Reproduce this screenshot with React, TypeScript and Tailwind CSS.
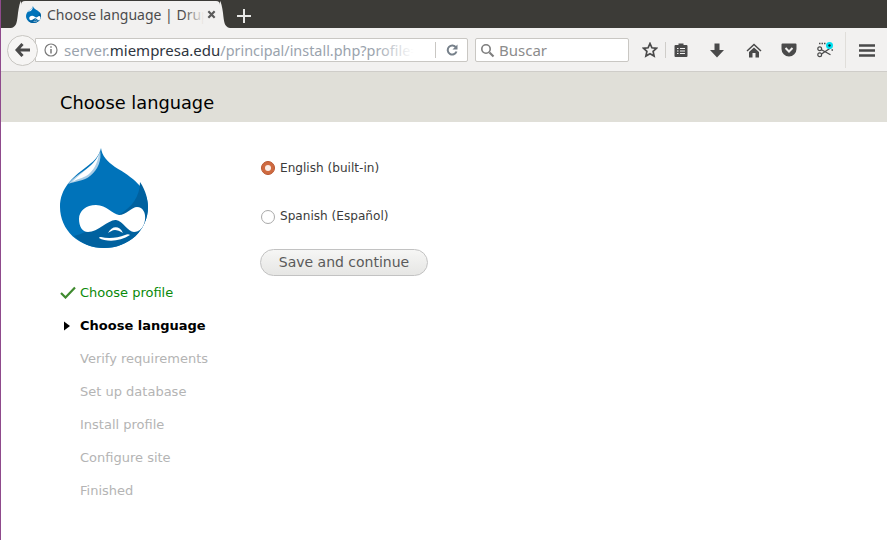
import React from "react";

const chrome = { fontFamily: '"Noto Sans", "Open Sans", sans-serif' };
const body = { fontFamily: '"DejaVu Sans", sans-serif' };

function DrupalDrop({ size }: { size: number }) {
  return (
    <svg width={size} height={Math.round(size * (100 / 88))} viewBox="0 0 88 100">
      <path d="M41 0C42 8 47 13 55 19C72 29 88 40 88 59C88 82 69 100 44 100C19 100 0 82 0 59C0 40 13 29 25 20C33 14 39 9 41 0Z" fill="#0073ba" />
      <path d="M80 34C86 43 88 52 88 59C88 82 69 100 44 100C32 100 22 96 14 88C30 84 45 72 58 67C72 60 80 48 80 34Z" fill="#00619f" />
      <path d="M40 2C39 10 33 16 25 22C19 26 13 30 8 36C16 33 24 33 30 28C38 22 42 12 40 2Z" fill="#a9cde6" />
      <path d="M39 6C36 14 28 20 22 25C18 28 15 31 12 34C19 30 25 30 30 25C35 20 38 13 39 6Z" fill="#ffffff" />
      <path d="M36 57C47 57 52 66 59 67C66 67 72 59 77 59C83 59 86 65 85 72C84 80 79 84 74 84C68 84 63 73 56 72C49 71 38 84 28 84C22 84 19 78 19 71C19 63 26 57 36 57Z" fill="#ffffff" />
      <path d="M39 90C46 94 60 94 70 87C69 86 67 86 65 87C58 90 48 91 41 89C40 89 39 89 39 90Z" fill="#ffffff" />
      <path d="M48 85C52 78 59 77 63 85C60 83 57 82 55 82C52 82 50 84 48 85Z" fill="#ffffff" />
    </svg>
  );
}

function Step({ label, state }: { label: string; state: "done" | "active" | "todo" }) {
  const color =
    state === "done"
      ? "text-[#0a8a0a]"
      : state === "active"
        ? "text-black font-bold"
        : "text-[#b4b4b4]";
  return (
    <li className={`flex h-[33px] items-center whitespace-nowrap text-[13px] ${color}`}>
      <span className="flex w-[20px] shrink-0 items-center">
        {state === "done" && (
          <svg width="16" height="13" viewBox="0 0 16 13">
            <path d="M1 7l4.500 4.500L15 1.500" fill="none" stroke="#3f8a2f" strokeWidth="2.200" />
          </svg>
        )}
        {state === "active" && (
          <svg width="14" height="10" viewBox="0 0 14 10">
            <path d="M4 0.500l6 4.500-6 4.500z" fill="#000" />
          </svg>
        )}
      </span>
      {label}
    </li>
  );
}

export default function App() {
  return (
    <div className="flex h-[540px] w-[887px] overflow-hidden bg-white">
      <div className="w-[1px] shrink-0 bg-[#8f4a8c]" />
      <div className="flex min-w-0 flex-1 flex-col">
        {/* tab strip */}
        <div className="flex h-[28px] items-end bg-[#3c3b37] pl-[10px]" style={chrome}>
          <svg width="10" height="27" viewBox="0 0 10 27">
            <path d="M0 27C6 26 6 20 7 12C8 5 9 1 10 0V27Z" fill="#f2f1f0" />
          </svg>
          <div className="flex h-[27px] w-[199px] items-center rounded-t-[4px] bg-[#f2f1f0] pl-[5px]">
            <DrupalDrop size={15} />
            <span className="relative ml-[6px] w-[157px] overflow-hidden whitespace-nowrap text-[14px] text-[#4c4c4c]">
              Choose language | Drupal
              <span className="absolute inset-y-0 right-0 w-[20px] bg-gradient-to-r from-transparent to-[#f2f1f0]" />
            </span>
            <svg className="ml-[3px]" width="9" height="9" viewBox="0 0 10 10">
              <path d="M1.500 1.500l7 7M8.500 1.500l-7 7" stroke="#5a5a5a" strokeWidth="2.400" />
            </svg>
          </div>
          <svg width="10" height="27" viewBox="0 0 10 27">
            <path d="M10 27C4 26 4 20 3 12C2 5 1 1 0 0V27Z" fill="#f2f1f0" />
          </svg>
          <svg className="mb-[5px] ml-[7px]" width="14" height="14" viewBox="0 0 14 14">
            <path d="M7 0v14M0 7h14" stroke="#e8e8e6" strokeWidth="2" />
          </svg>
        </div>

        {/* toolbar */}
        <div className="flex h-[44px] items-center border-b border-[#cfcdc9] bg-[#f2f1f0] pt-[1px]" style={chrome}>
          <div className="z-10 ml-[6px] flex h-[31px] w-[31px] shrink-0 items-center justify-center rounded-full border border-[#c8c6c2] bg-[#f6f5f4]">
            <svg width="16" height="14" viewBox="0 0 16 14">
              <path d="M7.500 1L2 7l5.500 6M2.500 7H15" fill="none" stroke="#4a4a4a" strokeWidth="3" />
            </svg>
          </div>
          <div className="-ml-[3px] flex h-[24px] w-[433px] shrink-0 items-center rounded-r-[2px] border border-[#c9c7c3] bg-white pl-[8px]">
            <svg width="14" height="14" viewBox="0 0 14 14">
              <circle cx="7" cy="7" r="6" fill="none" stroke="#7a7a7a" strokeWidth="1.200" />
              <path d="M7 6v4.500M7 3.300v1.500" stroke="#7a7a7a" strokeWidth="1.500" />
            </svg>
            <span className="relative ml-[6px] w-[350px] overflow-hidden whitespace-nowrap text-[15px] text-[#9aa3ad]">
              server.<span className="text-[#2e3540]">miempresa.edu</span>
              <span className="text-[14.4px]">/principal/install.php?profile=standard</span>
              <span className="absolute inset-y-0 right-0 w-[40px] bg-gradient-to-r from-transparent to-white" />
            </span>
            <span className="ml-[21px] h-[16px] w-[1px] bg-[#c9c7c3]" />
            <svg className="ml-[10px]" width="12" height="12" viewBox="0 0 12 12">
              <path d="M10 3.500A4.500 4.500 0 1 0 10.500 7.500" fill="none" stroke="#76808a" strokeWidth="2" />
              <path d="M11.500 0.500v5h-5z" fill="#76808a" />
            </svg>
          </div>
          <div className="ml-[7px] flex h-[24px] w-[154px] shrink-0 items-center rounded-[2px] border border-[#c9c7c3] bg-white pl-[4px]">
            <svg width="15" height="15" viewBox="0 0 15 15">
              <circle cx="6" cy="6" r="4.200" fill="none" stroke="#7d7d7d" strokeWidth="1.600" />
              <path d="M9.500 9.500l4 4" stroke="#7d7d7d" strokeWidth="2.200" />
            </svg>
            <span className="ml-[4px] text-[15px] text-[#8c8c8c]">Buscar</span>
          </div>

          <svg className="ml-[13px]" width="16" height="16" viewBox="0 0 16 16">
            <path d="M8 1.500l1.900 4.300 4.600.5-3.400 3.100 1 4.600L8 11.700l-4.100 2.300 1-4.600-3.400-3.100 4.600-.5z" fill="none" stroke="#4a4a4a" strokeWidth="1.700" />
          </svg>
          <span className="ml-[7px] h-[16px] w-[1px] bg-[#cfcdc9]" />
          <svg className="ml-[8px]" width="14" height="16" viewBox="0 0 14 16">
            <path d="M1.500 3h3V1.500h5V3h3A1 1 0 0 1 13.500 4v10a1 1 0 0 1-1 1h-11a1 1 0 0 1-1-1V4a1 1 0 0 1 1-1z" fill="#4a4a4a" />
            <path d="M3 6.500h1.500M6 6.500h5M3 9h1.500M6 9h5M3 11.500h1.500M6 11.500h5" stroke="#f2f1f0" strokeWidth="1.100" />
          </svg>
          <svg className="ml-[22px]" width="14" height="15" viewBox="0 0 14 15">
            <path d="M4.500 0.500h5V7H14l-7 7.500L0 7h4.500z" fill="#4a4a4a" />
          </svg>
          <svg className="ml-[22px]" width="16" height="15" viewBox="0 0 16 15">
            <path d="M8 0.500L0.500 7.500l1 1L8 2.500l6.500 6 1-1z" fill="#4a4a4a" />
            <path d="M8 4.500L3 9v5.500h3.500V10h3v4.500H13V9z" fill="#4a4a4a" />
          </svg>
          <svg className="ml-[19px]" width="16" height="14" viewBox="0 0 16 14">
            <path d="M1.500 0.500h13a1 1 0 0 1 1 1V6a7.500 7.500 0 0 1-15 0V1.500a1 1 0 0 1 1-1z" fill="#4a4a4a" />
            <path d="M4.500 5L8 8.500 11.500 5" fill="none" stroke="#f2f1f0" strokeWidth="2" />
          </svg>
          <svg className="ml-[20px]" width="17" height="16" viewBox="0 0 17 16">
            <circle cx="2.700" cy="12.800" r="1.900" fill="none" stroke="#4a4a4a" strokeWidth="1.200" />
            <circle cx="2.700" cy="6.800" r="1.900" fill="none" stroke="#4a4a4a" strokeWidth="1.200" />
            <path d="M4.500 7.800l9 5M4.500 12l9-6" stroke="#4a4a4a" strokeWidth="1.300" />
            <path d="M2 1.500h7M14.500 8h2" stroke="#4a4a4a" strokeWidth="1.400" strokeDasharray="1.500 1" />
            <circle cx="12.500" cy="3.500" r="3.500" fill="#00e0f0" />
            <circle cx="12.500" cy="3.500" r="1.200" fill="#123" />
          </svg>
          <span className="ml-[11px] h-[36px] w-[1px] bg-[#e0deda]" />
          <svg className="ml-[13px]" width="16" height="13" viewBox="0 0 16 13">
            <path d="M0 1.500h16M0 6.500h16M0 11.500h16" stroke="#4a4a4a" strokeWidth="2.600" />
          </svg>
        </div>

        {/* page header */}
        <div className="h-[50px] bg-[#e0dfd8] pl-[59px] pt-[21px] text-[17.8px] leading-[20px] text-black" style={body}>
          Choose language
        </div>

        {/* page body */}
        <div className="flex flex-1" style={body}>
          <aside className="w-[259px] shrink-0 pl-[59px] pt-[26px]">
            <DrupalDrop size={88} />
            <ol className="mt-[28px]">
              <Step label="Choose profile" state="done" />
              <Step label="Choose language" state="active" />
              <Step label="Verify requirements" state="todo" />
              <Step label="Set up database" state="todo" />
              <Step label="Install profile" state="todo" />
              <Step label="Configure site" state="todo" />
              <Step label="Finished" state="todo" />
            </ol>
          </aside>
          <main className="pt-[36px] text-[12.1px] text-[#3b3b3b]">
            <label className="flex h-[20px] items-center">
              <span className="ml-[1px] flex h-[14px] w-[14px] items-center justify-center rounded-full border border-[#b9562f] bg-[#cf6a40]">
                <span className="h-[6px] w-[6px] rounded-full bg-[#fbeee8]" />
              </span>
              <span className="ml-[5px]">English (built-in)</span>
            </label>
            <label className="mt-[28px] flex h-[20px] items-center">
              <span className="ml-[1px] mt-[2px] h-[14px] w-[14px] rounded-full border border-[#a9a9a9] bg-white" />
              <span className="ml-[5px]">Spanish (Español)</span>
            </label>
            <button className="mt-[23px] flex h-[27px] w-[168px] items-center justify-center rounded-full border border-[#c2c2c2] bg-gradient-to-b from-[#f6f6f5] to-[#e6e6e4] text-[14px] text-[#5a5a5a]">
              Save and continue
            </button>
          </main>
        </div>
      </div>
    </div>
  );
}
